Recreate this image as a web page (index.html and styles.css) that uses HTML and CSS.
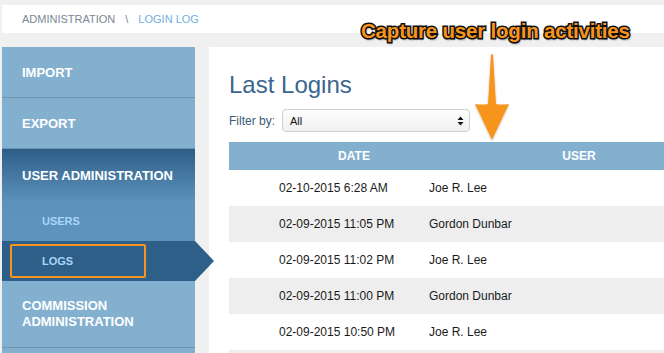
FILE: index.html
```html
<!DOCTYPE html>
<html>
<head>
<meta charset="utf-8">
<link rel="stylesheet" href="styles.css">
</head>
<body>
<div class="crumbs"><span class="crumb">ADMINISTRATION</span><span class="sep">\</span><span class="crumb-active">LOGIN LOG</span></div>
<div class="main">
  <nav class="sidebar">
    <div class="item">IMPORT</div>
    <div class="item">EXPORT</div>
    <div class="group">
      <div class="group-title">USER ADMINISTRATION</div>
      <div class="sub">USERS</div>
    </div>
    <div class="sub sub-active"><span class="hl">LOGS</span></div>
    <div class="item item-tall">COMMISSION<br>ADMINISTRATION</div>
    <div class="item"></div>
  </nav>
  <section class="content">
    <h1 class="title">Last Logins</h1>
    <div class="filter">
      <span class="filter-label">Filter by:</span>
      <div class="select"><span>All</span>
        <svg class="updown" width="7" height="10" viewBox="0 0 7 10"><path d="M3.5 0.5 L6.5 4 L0.5 4 Z M0.5 6 L6.5 6 L3.5 9.5 Z" fill="#111"/></svg>
      </div>
    </div>
    <div class="table">
      <div class="thead"><div class="th th-date">DATE</div><div class="th th-user">USER</div></div>
      <div class="tr"><div class="td-date">02-10-2015 6:28 AM</div><div class="td-user">Joe R. Lee</div></div>
      <div class="tr alt"><div class="td-date">02-09-2015 11:05 PM</div><div class="td-user">Gordon Dunbar</div></div>
      <div class="tr"><div class="td-date">02-09-2015 11:02 PM</div><div class="td-user">Joe R. Lee</div></div>
      <div class="tr alt"><div class="td-date">02-09-2015 11:00 PM</div><div class="td-user">Gordon Dunbar</div></div>
      <div class="tr"><div class="td-date">02-09-2015 10:50 PM</div><div class="td-user">Joe R. Lee</div></div>
      <div class="tr alt"><div class="td-date"></div><div class="td-user"></div></div>
    </div>
  </section>
</div>
<div class="callout">Capture user login activities</div>
<svg class="callout-arrow" width="60" height="100" viewBox="460 50 60 100">
  <defs><filter id="sh" x="-50%" y="-50%" width="200%" height="200%"><feDropShadow dx="0" dy="1" stdDeviation="1" flood-color="#000" flood-opacity="0.25"/></filter></defs>
  <path d="M491 55 Q492 53 493 55 L496 104 Q502 105 509 104 L492 140 L475 104 Q482 105 488 104 Z" fill="#f7941d" filter="url(#sh)"/>
</svg>
</body>
</html>
```
FILE: styles.css
```css
html, body {
  margin: 0;
  padding: 0;
  overflow: hidden;
}
body {
  background: #f0f0f0;
  font-family: "Liberation Sans", Arial, Helvetica, sans-serif;
  width: 664px;
  height: 353px;
  position: relative;
}
.crumbs {
  margin: 5px 0 0 2px;
  height: 28px;
  background: #fff;
  display: flex;
  align-items: center;
  padding-left: 20px;
  font-size: 11px;
}
.crumb { color: #7b8794; }
.sep { color: #7b8794; margin: 0 10px 0 10px; }
.crumb-active { color: #74aee0; }
.main {
  display: flex;
  margin-top: 14px;
  margin-left: 2px;
  gap: 14px;
  height: 306px;
  overflow: hidden;
}
.sidebar {
  width: 193px;
  flex: none;
  background: #84b0d0;
  color: #fff;
  font-weight: bold;
  font-size: 13px;
}
.item {
  height: 50px;
  display: flex;
  align-items: center;
  padding-left: 20px;
  border-bottom: 1px solid #6f94b3;
}
.item-tall {
  height: 66px;
  line-height: 16px;
}
.group {
  background: linear-gradient(#2e5e87 0%, #5d92bc 58%, #5e93bd 100%);
}
.group-title {
  height: 52px;
  display: flex;
  align-items: center;
  padding-left: 20px;
}
.sub {
  height: 40px;
  display: flex;
  align-items: center;
  padding-left: 40px;
  font-size: 11px;
  color: #a8d6f7;
}
.sub-active {
  background: #2d5f88;
  position: relative;
  padding-left: 8px;
}
.sub-active::after {
  content: "";
  position: absolute;
  right: -19px;
  top: 0;
  border-top: 20px solid transparent;
  border-bottom: 20px solid transparent;
  border-left: 19px solid #2d5f88;
}
.hl {
  width: 102px;
  height: 30px;
  border: 2px solid #f7941d;
  border-radius: 2px;
  display: flex;
  align-items: center;
  padding-left: 30px;
}
.content {
  flex: 1;
  background: #fff;
  padding: 20px 0 0 20px;
  min-width: 0;
}
.title {
  margin: 0;
  font-weight: normal;
  font-size: 24px;
  color: #3a6590;
  line-height: 36px;
  height: 42px;
}
.filter {
  display: flex;
  align-items: center;
  gap: 7px;
  height: 23px;
}
.filter-label {
  font-size: 12px;
  color: #3b5b7a;
}
.select {
  width: 174px;
  height: 21px;
  border: 1px solid #cfcfcf;
  border-radius: 4px;
  background: linear-gradient(#fdfdfd, #f1f1f1);
  display: flex;
  align-items: center;
  justify-content: space-between;
  padding: 0 5px 0 7px;
  font-size: 11px;
  color: #111;
}
.table {
  margin-top: 10px;
  width: 450px;
  font-size: 12px;
}
.thead {
  display: flex;
  height: 28px;
  background: #84b0d0;
  color: #fff;
  font-weight: bold;
  align-items: center;
}
.th-date { width: 250px; text-align: center; }
.th-user { width: 200px; text-align: center; }
.tr {
  display: flex;
  height: 36px;
  align-items: center;
  color: #1a1a1a;
  background: #fff;
}
.tr.alt { background: #eeeeee; }
.td-date { width: 150px; padding-left: 50px; }
.td-user { width: 200px; }
.callout {
  position: absolute;
  left: 361px;
  top: 19px;
  font-size: 20.5px;
  font-weight: bold;
  color: #f7941d;
  -webkit-text-stroke: 3px #111;
  paint-order: stroke fill;
  text-shadow: 1px 2px 2px rgba(0,0,0,0.45);
  letter-spacing: -0.2px;
}
.callout-arrow {
  position: absolute;
  left: 460px;
  top: 50px;
}
```
